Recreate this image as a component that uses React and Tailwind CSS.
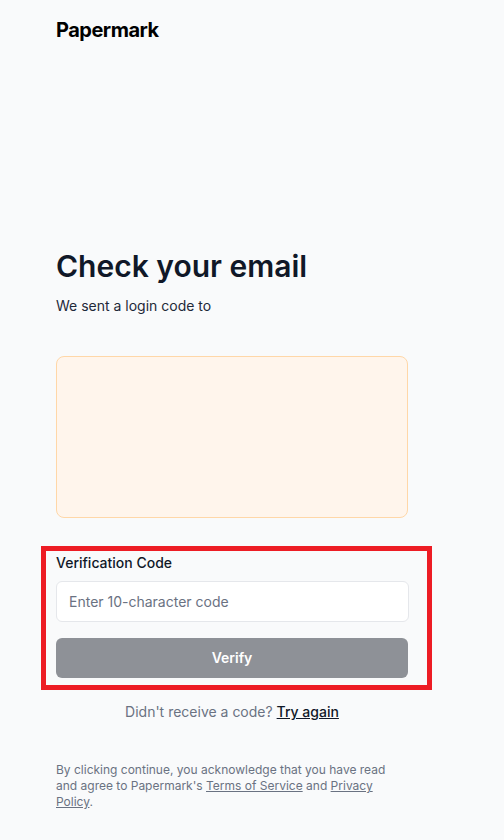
import { useState } from 'react';

const App = () => {
  const [code, setCode] = useState('');

  return (
    <div className="min-h-[840px] w-full bg-gray-50 font-['Inter',sans-serif] text-gray-900">
      <div className="px-14">
        {/* Logo */}
        <header className="pt-4">
          <span className="text-xl font-bold leading-7 tracking-tight text-black">Papermark</span>
        </header>

        <main className="w-[352px] pt-[204px]">
          <h1 className="text-[30px] font-semibold leading-9 text-gray-900">Check your email</h1>
          <p className="mt-3 text-sm leading-5 text-gray-800">We sent a login code to</p>

          {/* Email preview placeholder */}
          <div className="mt-10 h-[162px] rounded-lg border border-orange-200 bg-[#fff5ec]"></div>

          {/* Verification form */}
          <form className="relative mt-[35px]" onSubmit={(e) => e.preventDefault()}>
            <label className="block text-sm font-medium leading-5 text-gray-900">Verification Code</label>
            <input
              value={code}
              onChange={(e) => setCode(e.target.value)}
              placeholder="Enter 10-character code"
              className="mt-2 h-[41px] w-[353px] rounded-md border border-gray-200 bg-white px-3 text-sm text-gray-900 placeholder:text-gray-500 focus:outline-none"
            />
            <button
              type="submit"
              className="mt-4 flex h-10 w-full items-center justify-center rounded-md bg-[#8e9197] text-sm font-semibold text-white"
            >
              Verify
            </button>
            {/* highlight annotation */}
            <div className="pointer-events-none absolute -top-[7px] -right-[24px] -bottom-[12px] -left-[15px] border-[5px] border-[#ed1c24]"></div>
          </form>

          <p className="mt-6 text-center text-sm leading-5 text-gray-500">
            Didn't receive a code?{' '}
            <a href="#" className="font-medium text-gray-900 underline">Try again</a>
          </p>

          <p className="mt-10 text-xs leading-4 text-gray-500">
            By clicking continue, you acknowledge that you have read and agree to Papermark's{' '}
            <a href="#" className="underline">Terms of Service</a> and{' '}
            <a href="#" className="underline">Privacy Policy</a>.
          </p>
        </main>
      </div>
    </div>
  );
};

export default App;
